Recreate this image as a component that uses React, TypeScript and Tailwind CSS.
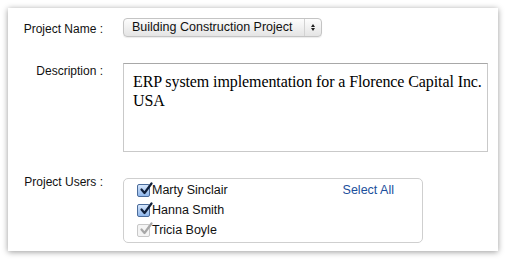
import { useState } from "react";

const users = [
    { name: "Marty Sinclair", checked: true, disabled: false },
    { name: "Hanna Smith", checked: true, disabled: false },
    { name: "Tricia Boyle", checked: true, disabled: true },
];

function Check({ disabled }: { disabled: boolean }) {
    return (
        <span
            className={`relative flex h-[13px] w-[13px] shrink-0 items-center justify-center rounded-[2px] border ${
                disabled
                    ? "border-[#c8c8c8] bg-[#f4f4f4]"
                    : "border-[#4a6b9a] bg-gradient-to-b from-[#d6e6fb] to-[#8fb6ea]"
            }`}
        >
            <svg viewBox="0 0 14 14" className="absolute -top-[3px] left-[1px] h-[14px] w-[14px]">
                <path
                    d="M2.5 7.5 L5.5 11 L12.5 1.5"
                    fill="none"
                    stroke={disabled ? "#a8a8a8" : "#0f1f3a"}
                    strokeWidth="2.2"
                    strokeLinecap="round"
                    strokeLinejoin="round"
                />
            </svg>
        </span>
    );
}

export default function App() {
    const [desc] = useState("ERP system implementation for a Florence Capital Inc. USA");

    return (
        <div className="h-[260px] w-[507px] bg-white pl-2 pt-2 font-['Liberation_Sans',Arial,sans-serif] text-[12px] text-[#111]">
            <div className="h-[243px] w-[490px] bg-white pt-[10px] shadow-[0_1px_6px_rgba(0,0,0,0.4)]">
                <div className="flex h-[19px] items-start">
                    <div className="w-[95px] pt-[3px] text-right text-[12px] leading-[16px]">Project Name :</div>
                    <div className="ml-[20px] flex h-[19px] w-[199px] items-center rounded-[4px] border border-[#c4c4c4] bg-gradient-to-b from-[#fdfdfd] to-[#e4e4e4] shadow-[0_1px_1px_rgba(0,0,0,0.08)]">
                        <span className="flex-1 pl-[8px] text-[12.5px] leading-none">Building Construction Project</span>
                        <span className="flex h-full w-[17px] flex-col items-center justify-center gap-[1px] border-l border-[#d2d2d2]">
                            <span className="h-0 w-0 border-x-[2.5px] border-b-[3px] border-x-transparent border-b-[#222]" />
                            <span className="h-0 w-0 border-x-[2.5px] border-t-[3px] border-x-transparent border-t-[#222]" />
                        </span>
                    </div>
                </div>

                <div className="mt-[26px] flex h-[89px] items-start">
                    <div className="w-[95px] text-right text-[12px] leading-[16px]">Description :</div>
                    <div className="ml-[20px] h-[89px] w-[365px] border border-[#c9c9c9] border-t-[#a8a8a8] bg-white pl-[9px] pr-0 pt-[8px] font-['Liberation_Serif','Times_New_Roman',serif] text-[16px] leading-[19px] tracking-[-0.1px] text-black">
                        {desc}
                    </div>
                </div>

                <div className="mt-[26px] flex h-[65px] items-start">
                    <div className="-mt-[4px] w-[95px] text-right text-[12px] leading-[16px]">Project Users :</div>
                    <div className="ml-[20px] flex h-[65px] w-[300px] rounded-[5px] border border-[#cfcfcf] pl-[13px] pr-[28px] pt-[4px]">
                        <div className="flex flex-1 flex-col gap-[5px]">
                            {users.map((u) => (
                                <label key={u.name} className="flex h-[15px] items-center gap-[2px] text-[12.5px]">
                                    <Check disabled={u.disabled} />
                                    <span>{u.name}</span>
                                </label>
                            ))}
                        </div>
                        <span className="h-[15px] text-[12.5px] leading-[15px] text-[#1b4f9c]">Select All</span>
                    </div>
                </div>
            </div>
        </div>
    );
}
